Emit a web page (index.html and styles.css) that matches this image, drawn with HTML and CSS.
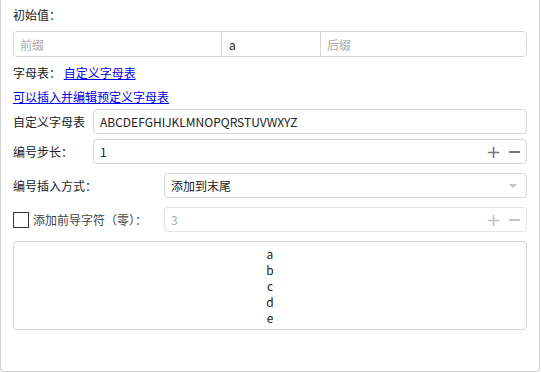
FILE: index.html
```html
<!DOCTYPE html>
<html lang="zh-CN">
<head>
<meta charset="utf-8">
<title>编号设置</title>
<link rel="stylesheet" href="styles.css">
</head>
<body>
<div class="panel">
    <div class="title">初始值：</div>

    <div class="group">
        <input class="cell pre" type="text" placeholder="前缀">
        <input class="cell mid" type="text" value="a">
        <input class="cell suf" type="text" placeholder="后缀">
    </div>

    <div class="line alpha">字母表： <a href="#">自定义字母表</a></div>
    <div class="line"><a href="#">可以插入并编辑预定义字母表</a></div>

    <div class="row first">
        <label class="lab w80">自定义字母表</label>
        <input class="box" type="text" value="ABCDEFGHIJKLMNOPQRSTUVWXYZ">
    </div>

    <div class="row second">
        <label class="lab w80">编号步长：</label>
        <div class="box num">
            <span class="val">1</span>
            <span class="ops"><span class="plus">+</span><span class="minus"></span></span>
        </div>
    </div>

    <div class="row">
        <label class="lab w151">编号插入方式：</label>
        <div class="box sel">
            <span class="val">添加到末尾</span>
            <span class="arrow"></span>
        </div>
    </div>

    <div class="row">
        <label class="lab w151 chk"><span class="check"></span>添加前导字符（零）：</label>
        <div class="box num off">
            <span class="val">3</span>
            <span class="ops"><span class="plus">+</span><span class="minus"></span></span>
        </div>
    </div>

    <div class="list">
        <div>a</div>
        <div>b</div>
        <div>c</div>
        <div>d</div>
        <div>e</div>
    </div>
</div>
</body>
</html>
```

FILE: styles.css
```css
body{margin:0; padding:0; background:#fff; font-family:"Noto Sans CJK SC","Noto Sans",sans-serif; font-size:12px; color:#222;}
a{color:#0000ee;}
input{font-family:inherit; font-size:12px; color:#222; outline:none; margin:0;}
input::placeholder{color:#aaa;}

/*外框*/
.panel{box-sizing:border-box; width:540px; height:372px; border:1px solid #d0d0d0; border-top:none; border-radius:0 0 4px 4px; padding:6px 12px 0 12px;}
.title{height:18px; line-height:18px;}

/*前缀 / 值 / 后缀*/
.group{display:flex; height:26px; margin-top:7px; border:1px solid #d6d6d6; border-radius:4px; box-sizing:border-box;}
.cell{box-sizing:border-box; border:none; padding:0 6px; height:24px; background:transparent; flex:0 0 auto;}
.pre{width:207px; border-radius:4px 0 0 4px;}
.mid{width:100px; border-left:1px solid #d6d6d6; border-right:1px solid #d6d6d6; padding-left:7px;}
.suf{flex:1; min-width:0; border-radius:0 4px 4px 0;}

.line{height:18px; line-height:18px; margin-top:6px;}
.alpha{margin-top:7px;}

/*表单行*/
.row{display:flex; align-items:center; height:25px; margin-top:9px;}
.row.first{margin-top:3px;}
.row.second{margin-top:5px;}
.lab{flex:0 0 auto; white-space:nowrap;}
.w80{width:80px;}
.w151{width:151px;}
.box{flex:1; min-width:0; box-sizing:border-box; height:25px; border:1px solid #d6d6d6; border-radius:4px; padding:0 6px; display:flex; align-items:center;}
.val{flex:1;}

.ops{display:flex; align-items:center; color:#777;}
.plus{font-size:18px; line-height:18px; font-family:"DejaVu Sans",sans-serif; width:11px; text-align:center; margin-right:12px;}
.minus{display:inline-block; width:11px; height:2px; background:#777;}

.sel .arrow{width:0; height:0; border-left:4px solid transparent; border-right:4px solid transparent; border-top:4px solid #c4c4c4; margin-right:3px;}

.off{border-color:#e3e3e3;}
.off .val{color:#aaa;}
.off .ops{color:#c4c4c4;}
.off .minus{background:#c4c4c4;}

.chk{display:flex; align-items:center; color:#444;}
.check{display:inline-block; box-sizing:border-box; width:16px; height:16px; border:1px solid #333; margin-right:4px;}

/*预览*/
.list{box-sizing:border-box; height:89px; margin-top:9px; border:1px solid #d6d6d6; border-radius:4px; padding-top:4px; text-align:center; line-height:16px; color:#222;}
```
